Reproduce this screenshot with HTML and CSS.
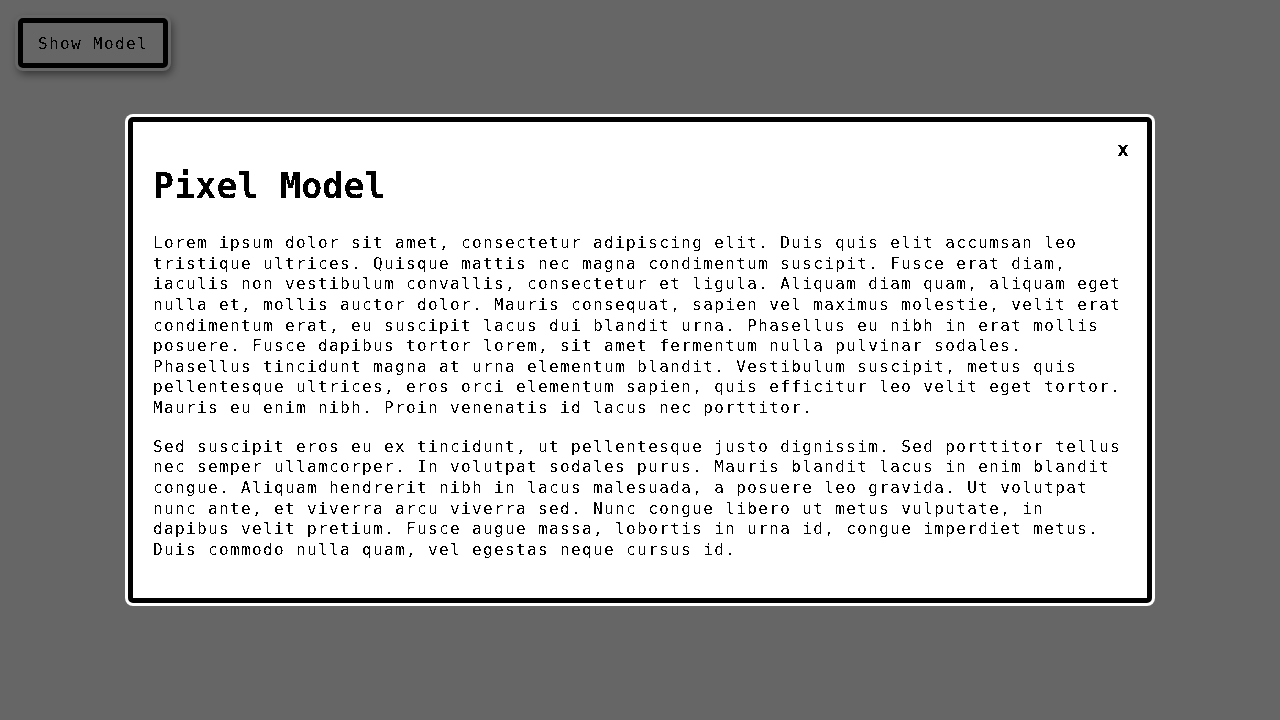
FILE: index.html
```html
<!DOCTYPE html>
<html lang="en">
<head>
    <meta charset="UTF-8">
    <title>Pixel Model</title>
    <link rel="stylesheet" href="styles.css">
</head>
<body>
    <!-- 去掉文字抗锯齿 -->
    <svg class="defs" width="0" height="0">
        <filter id="crisp" x="0" y="0" width="100%" height="100%" color-interpolation-filters="sRGB">
            <feComponentTransfer>
                <feFuncA type="discrete" tableValues="0 1"/>
            </feComponentTransfer>
        </filter>
    </svg>
    <button class="openBtn" type="button"><span class="crisp">Show Model</span></button>
    <!-- 遮罩层 -->
    <div class="overlay">
        <div class="model">
            <span class="closeBtn crisp">x</span>
            <h1 class="modelTitle crisp">Pixel Model</h1>
            <p class="modelText crisp">Lorem ipsum dolor sit amet, consectetur adipiscing elit. Duis quis elit accumsan leo tristique ultrices. Quisque mattis nec magna condimentum suscipit. Fusce erat diam, iaculis non vestibulum convallis, consectetur et ligula. Aliquam diam quam, aliquam eget nulla et, mollis auctor dolor. Mauris consequat, sapien vel maximus molestie, velit erat condimentum erat, eu suscipit lacus dui blandit urna. Phasellus eu nibh in erat mollis posuere. Fusce dapibus tortor lorem, sit amet fermentum nulla pulvinar sodales. Phasellus tincidunt magna at urna elementum blandit. Vestibulum suscipit, metus quis pellentesque ultrices, eros orci elementum sapien, quis efficitur leo velit eget tortor. Mauris eu enim nibh. Proin venenatis id lacus nec porttitor.</p>
            <p class="modelText crisp">Sed suscipit eros eu ex tincidunt, ut pellentesque justo dignissim. Sed porttitor tellus nec semper ullamcorper. In volutpat sodales purus. Mauris blandit lacus in enim blandit congue. Aliquam hendrerit nibh in lacus malesuada, a posuere leo gravida. Ut volutpat nunc ante, et viverra arcu viverra sed. Nunc congue libero ut metus vulputate, in dapibus velit pretium. Fusce augue massa, lobortis in urna id, congue imperdiet metus. Duis commodo nulla quam, vel egestas neque cursus id.</p>
        </div>
    </div>
</body>
</html>
```

FILE: styles.css
```css
body{
    margin: 0;
    height: 720px;
    padding: 18px;
    box-sizing: border-box;
    background: #fff;
    font-family: "DejaVu Sans Mono", monospace;
}
.defs{
    display: block;
    height: 0;
}
.crisp{
    filter: url(#crisp);
}
.openBtn{
    display: block;
    width: 150px;
    height: 50px;
    padding: 0;
    background: #fff;
    color: #000;
    border: 5px solid #000;
    border-radius: 5px;
    box-shadow: 0 0 0 3px #fff, 2px 4px 8px 2px rgba(0,0,0,.5);
    font-family: inherit;
    font-size: 16px;
    letter-spacing: 1.37px;
}
.overlay{
    position: fixed;
    top: 0;
    left: 0;
    width: 100%;
    height: 100%;
    background: rgba(0,0,0,.6);
    display: flex;
    align-items: center;
    justify-content: center;
}
.model{
    position: relative;
    width: 1024px;
    box-sizing: border-box;
    padding: 20px 20px 20px;
    background: #fff;
    color: #000;
    border: 5px solid #000;
    border-radius: 5px;
    box-shadow: 0 0 0 3px #fff;
}
.closeBtn{
    position: absolute;
    top: 15px;
    right: 18px;
    font-size: 20px;
    font-weight: bold;
}
.modelTitle{
    margin: 24px 0 27.5px;
    font-size: 35px;
    line-height: 40px;
    letter-spacing: .1px;
}
.modelText{
    margin: 18px 0;
    font-size: 16px;
    line-height: 20.625px;
    letter-spacing: 1.37px;
}
```
